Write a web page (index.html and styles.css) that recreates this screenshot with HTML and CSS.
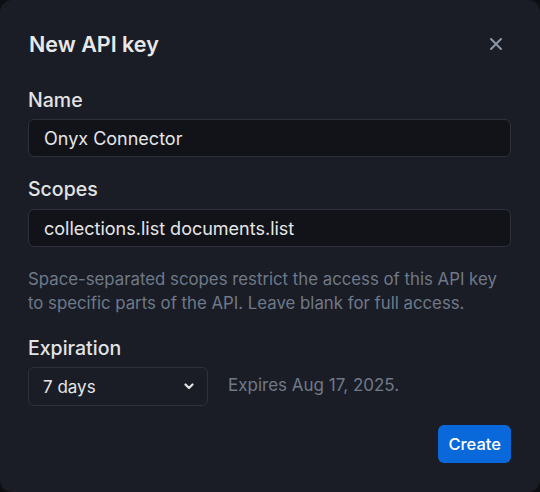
FILE: index.html
```html
<!DOCTYPE html>
<html lang="en">
<head>
<meta charset="utf-8">
<title>New API key</title>
<link rel="stylesheet" href="styles.css">
</head>
<body>
<div class="modal">
  <div class="header">
    <h1 class="title">New API key</h1>
    <button class="close" aria-label="Close">
      <svg width="12" height="12" viewBox="0 0 12 12"><path d="M1 1L11 11M11 1L1 11" stroke="currentColor" stroke-width="2" stroke-linecap="round"/></svg>
    </button>
  </div>
  <div class="field field-name">
    <label class="label">Name</label>
    <div class="input">Onyx Connector</div>
  </div>
  <div class="field field-scopes">
    <label class="label">Scopes</label>
    <div class="input">collections.list documents.list</div>
  </div>
  <p class="help">Space-separated scopes restrict the access of this API key to specific parts of the API. Leave blank for full access.</p>
  <div class="field field-exp">
    <label class="label">Expiration</label>
    <div class="exp-row">
      <div class="select">
        <span>7 days</span>
        <svg class="chev" width="10" height="7" viewBox="0 0 10 7"><path d="M1.5 1.5L5 5L8.5 1.5" fill="none" stroke="currentColor" stroke-width="2.2" stroke-linecap="round" stroke-linejoin="round"/></svg>
      </div>
      <span class="expires">Expires Aug 17, 2025.</span>
    </div>
  </div>
  <div class="actions">
    <button class="primary">Create</button>
  </div>
</div>
</body>
</html>
```
FILE: styles.css
```css
html, body {
  margin: 0;
  padding: 0;
  background: #0e0f13;
}
body {
  font-family: Inter, "Noto Sans", sans-serif;
  -webkit-font-smoothing: antialiased;
}
.modal {
  box-sizing: border-box;
  width: 540px;
  height: 492px;
  background: #1a1d25;
  border-radius: 12px;
  padding: 30px 29px 0 28px;
  color: #e4e5e7;
}
.header {
  display: flex;
  align-items: center;
  justify-content: space-between;
  height: 28px;
}
.title {
  margin: 0;
  font-size: 21.5px;
  font-weight: 600;
  line-height: 28px;
  color: #e8e8e9;
  padding-left: 1px;
}
.close {
  background: none;
  border: 0;
  padding: 0;
  margin-right: 9px;
  color: #8d96a6;
  display: flex;
}
.field {
  display: flex;
  flex-direction: column;
}
.label {
  font-size: 19.5px;
  font-weight: 500;
  line-height: 24px;
  color: #e2e3e5;
  margin-bottom: 7px;
}
.field-name .label { margin-top: 30px; }
.field-scopes .label { margin-top: 20px; margin-bottom: 8px; }
.field-exp .label { margin-top: 21px; }
.input {
  box-sizing: border-box;
  height: 38px;
  border: 1px solid #2d313a;
  border-radius: 6px;
  background: #121318;
  padding: 0 15px;
  display: flex;
  align-items: center;
  font-size: 18px;
  color: #e6e6e8;
}
.help {
  margin: 20px 0 0;
  font-size: 16.8px;
  line-height: 24px;
  color: #6f7989;
}
.exp-row {
  display: flex;
  align-items: center;
  gap: 20px;
}
.select {
  box-sizing: border-box;
  width: 180px;
  height: 39px;
  border: 1px solid #2d313a;
  border-radius: 6px;
  padding: 0 13px 0 14px;
  display: flex;
  align-items: center;
  justify-content: space-between;
  font-size: 17px;
  color: #e6e6e8;
}
.chev { color: #e2e3e5; }
.expires {
  font-size: 17px;
  color: #6f7989;
  margin-top: -4px;
}
.actions {
  display: flex;
  justify-content: flex-end;
  margin-top: 19px;
}
.primary {
  font-family: inherit;
  font-size: 16.5px;
  font-weight: 500;
  height: 38px;
  padding: 0 10px;
  border: 0;
  border-radius: 6px;
  background: #0969da;
  color: #fff;
}
```
